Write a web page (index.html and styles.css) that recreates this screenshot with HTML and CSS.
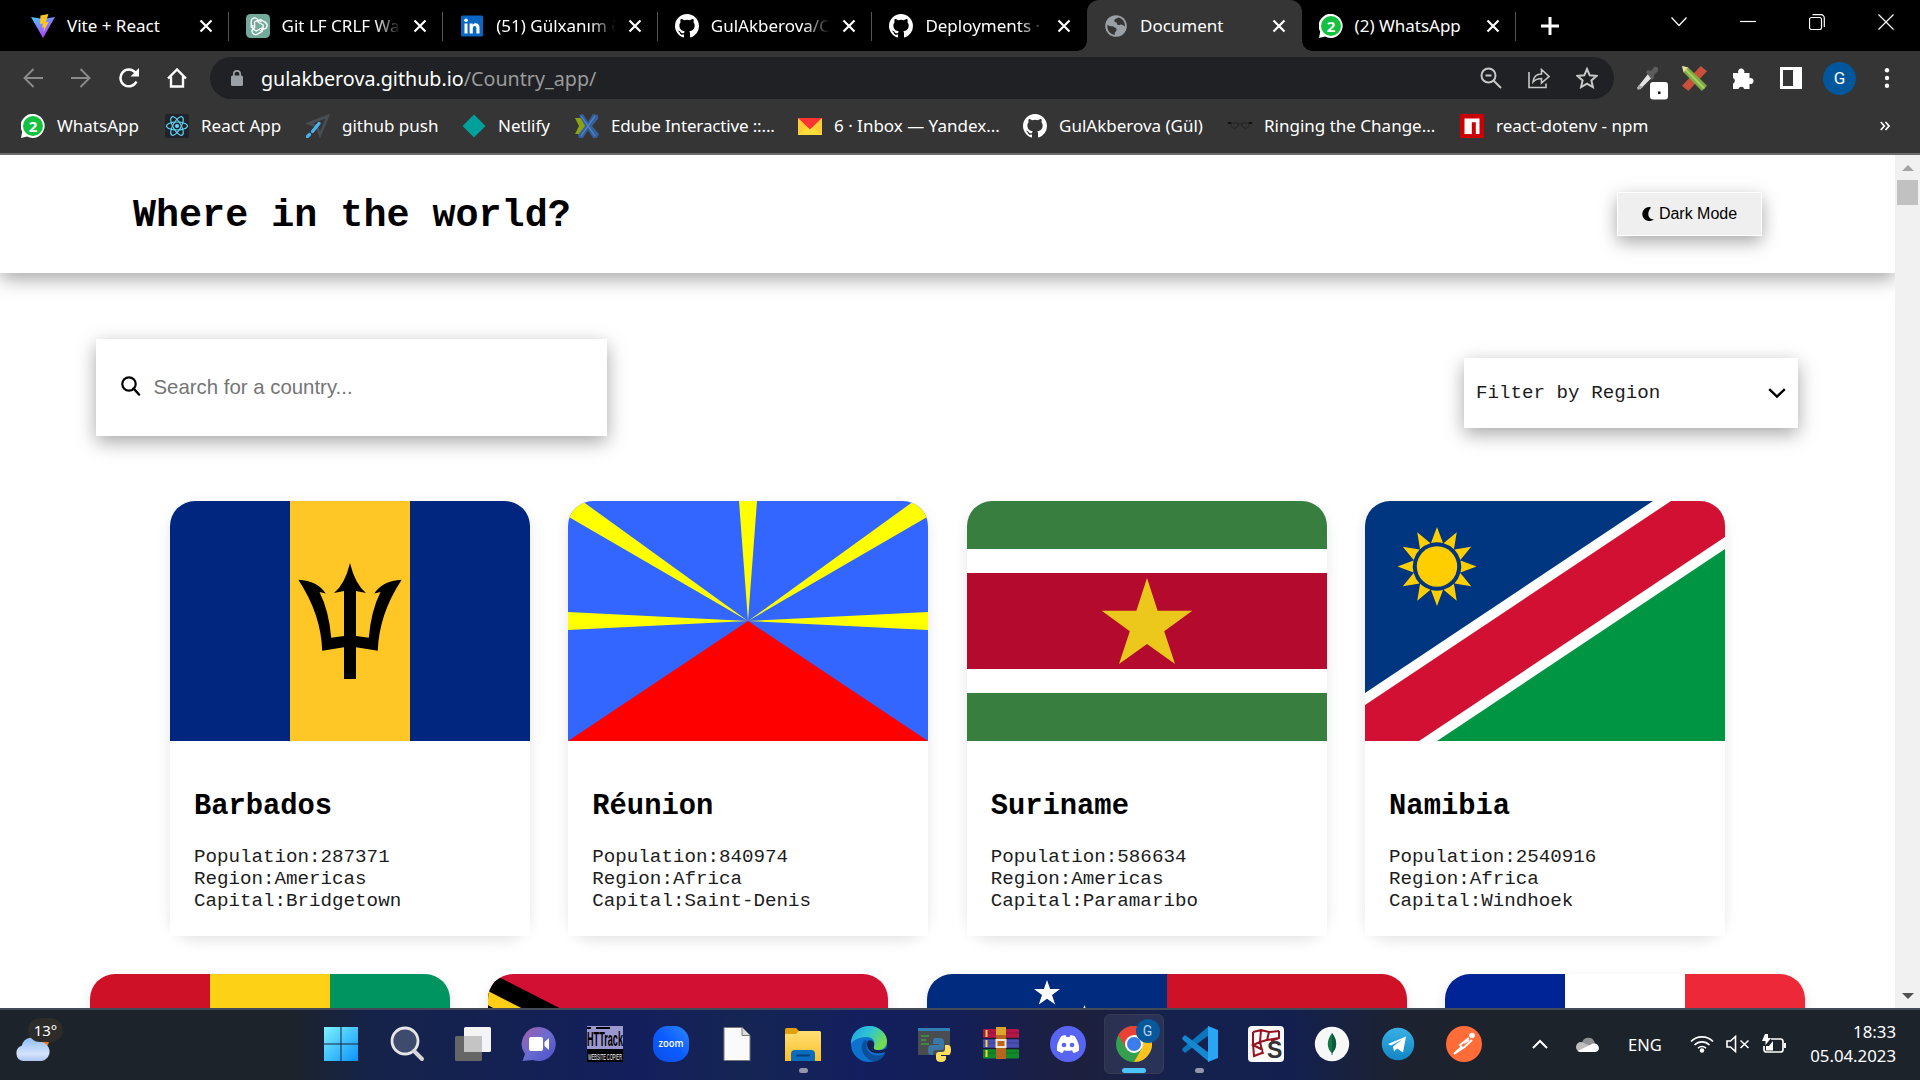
FILE: index.html
```html
<!DOCTYPE html>
<html lang="en">
<head>
<meta charset="utf-8">
<title>Document</title>
<link rel="stylesheet" href="styles.css">
</head>
<body>
<svg class="defs" aria-hidden="true">
  <defs>
    <linearGradient id="g-vite" x1="0" y1="0" x2=".6" y2="1"><stop offset="0" stop-color="#41d1ff"/><stop offset="1" stop-color="#bd34fe"/></linearGradient>
    <linearGradient id="g-win" x1="0" y1="0" x2="1" y2="1"><stop offset="0" stop-color="#7df3ff"/><stop offset="1" stop-color="#0a93fa"/></linearGradient>
    <linearGradient id="g-cloud" x1="0" y1="0" x2="0" y2="1"><stop offset="0" stop-color="#8fbdf7"/><stop offset=".7" stop-color="#d5e3fa"/><stop offset="1" stop-color="#a9c4ee"/></linearGradient>
    <linearGradient id="g-chat" x1="0" y1="0" x2="1" y2="1"><stop offset="0" stop-color="#a35ca8"/><stop offset=".5" stop-color="#6a6ccf"/><stop offset="1" stop-color="#4a50c8"/></linearGradient>
    <linearGradient id="g-folder" x1="0" y1="0" x2="0" y2="1"><stop offset="0" stop-color="#ffdf74"/><stop offset="1" stop-color="#fbc02a"/></linearGradient>
    <linearGradient id="g-edge" x1="0" y1="0" x2="1" y2=".5"><stop offset="0" stop-color="#1b9de2"/><stop offset=".5" stop-color="#2fc3d6"/><stop offset="1" stop-color="#72dc50"/></linearGradient>
    <linearGradient id="g-tg" x1="0" y1="0" x2="0" y2="1"><stop offset="0" stop-color="#38b0e4"/><stop offset="1" stop-color="#1286c4"/></linearGradient>
    <linearGradient id="g-zoom" x1="1" y1="0" x2="0" y2="1"><stop offset="0" stop-color="#2f86ff"/><stop offset=".5" stop-color="#0b5cff"/><stop offset="1" stop-color="#0a4fe6"/></linearGradient>
    <symbol id="close" viewBox="0 0 14 14"><path d="M1.500 1.500l11 11M12.500 1.500l-11 11" stroke="#fff" stroke-width="2.200" fill="none"/></symbol>
    <symbol id="github" viewBox="0 0 16 16"><path fill="#fff" fill-rule="evenodd" d="M8 0C3.58 0 0 3.58 0 8c0 3.54 2.29 6.53 5.47 7.59.4.07.55-.17.55-.38 0-.19-.01-.82-.01-1.49-2.01.37-2.53-.49-2.69-.94-.09-.23-.48-.94-.82-1.13-.28-.15-.68-.52-.01-.53.63-.01 1.08.58 1.23.82.72 1.21 1.87.87 2.33.66.07-.52.28-.87.51-1.07-1.78-.2-3.64-.89-3.64-3.95 0-.87.31-1.59.82-2.15-.08-.2-.36-1.02.08-2.12 0 0 .67-.21 2.2.82a7.6 7.6 0 0 1 4 0c1.53-1.04 2.2-.82 2.2-.82.44 1.1.16 1.92.08 2.12.51.56.82 1.27.82 2.15 0 3.07-1.87 3.75-3.65 3.95.29.25.54.73.54 1.48 0 1.07-.01 1.93-.01 2.2 0 .21.15.46.55.38A8.01 8.01 0 0 0 16 8c0-4.42-3.58-8-8-8z"/></symbol>
    <symbol id="whatsapp" viewBox="0 0 24 24"><path d="M0 24l1.200-6.200A12 12 0 1 1 6 22.500z" fill="#fff"/><circle cx="12" cy="12" r="10" fill="#14c13f"/><text x="12" y="17.500" text-anchor="middle" font-family="Open Sans, sans-serif" font-weight="700" font-size="15" fill="#fff">2</text></symbol>
  </defs>
</svg>

<header class="browser">
  <div class="tabstrip">
    <div class="tab"><svg class="fav" viewBox="0 0 24 24"><path d="M0 3l12 2 12-2L12 24z" fill="url(#g-vite)"/><path d="M17.500 0L9.500 1.500 9 10l3-.6-1 4.300 2.200-.5-1 5 5.500-10.500-3 .6z" fill="#ffc61c"/></svg><span class="tab-title">Vite + React</span><svg class="x"><use href="#close"/></svg></div>
    <div class="tab"><svg class="fav" viewBox="0 0 24 24"><rect width="24" height="24" rx="4.500" fill="#74aa9c"/><g fill="none" stroke="#fff" stroke-width="1.300"><g id="knot"><path d="M8.600 14V8l3.400-2 3.500 2M12 6c-1.500-3.400-6.500-2.600-6.800 1.500V13l3.500 2"/></g><use href="#knot" transform="rotate(120 12 12)"/><use href="#knot" transform="rotate(240 12 12)"/></g></svg><span class="tab-title fade">Git LF CRLF Wa</span><svg class="x"><use href="#close"/></svg></div>
    <div class="tab"><svg class="fav" viewBox="0 0 24 24"><rect x="1" y="1.500" width="22" height="21" rx="1.500" fill="#0a66c2"/><path d="M4.500 9.500h3v10h-3zM9.600 9.500h3v1.400c1.600-2.600 6.900-2.300 6.900 2.600v6h-3.100v-5.300c0-3-3.600-2.800-3.600 0v5.300H9.600z" fill="#fff"/><circle cx="6" cy="6.200" r="1.800" fill="#fff"/></svg><span class="tab-title fade">(51) Gülxanım Ə</span><svg class="x"><use href="#close"/></svg></div>
    <div class="tab"><svg class="fav"><use href="#github"/></svg><span class="tab-title fade">GulAkberova/C</span><svg class="x"><use href="#close"/></svg></div>
    <div class="tab"><svg class="fav"><use href="#github"/></svg><span class="tab-title fade">Deployments ·</span><svg class="x"><use href="#close"/></svg></div>
    <div class="tab active"><svg class="fav" viewBox="0 0 24 24"><circle cx="12" cy="12" r="10.800" fill="#9aa0a6"/><path d="M3.500 10.500c2 2.500 4.500 1 6.500 2.500s3 1 2.500 3-2 1.500-1.800 5C6 20.500 2.500 15.500 3.500 10.500zM14 3.600c-1 1.500-3.500 1-3.700 3S13 8 13 9.500s1.500 2 3 1.300 3 .2 4.800 1.700C21.500 8 18 4 14 3.600z" fill="#353535"/></svg><span class="tab-title">Document</span><svg class="x"><use href="#close"/></svg></div>
    <div class="tab"><svg class="fav"><use href="#whatsapp"/></svg><span class="tab-title">(2) WhatsApp</span><svg class="x"><use href="#close"/></svg></div>
    <svg class="newtab" viewBox="0 0 18 18"><path d="M9 0v18M0 9h18" stroke="#fff" stroke-width="3"/></svg>
    <div class="winctl">
      <svg viewBox="0 0 16 16"><path d="M.5 3.500L8 11.500l7.500-8"/></svg>
      <svg viewBox="0 0 16 16"><path d="M0 7.500h16"/></svg>
      <svg viewBox="0 0 16 16"><rect x=".5" y="3.500" width="12" height="12" rx="2"/><path d="M3.500 .7h8.500a3.300 3.300 0 0 1 3.300 3.300V13"/></svg>
      <svg viewBox="0 0 16 16"><path d="M.5 .5l15 15M15.500 .5l-15 15"/></svg>
    </div>
  </div>

  <div class="toolbar">
    <div class="nav">
      <svg class="dim" viewBox="0 0 20 20"><path d="M20 10H2M10.500 1L1.500 10l9 9"/></svg>
      <svg class="dim" viewBox="0 0 20 20"><path d="M0 10h18M9.500 1l9 9-9 9"/></svg>
      <svg viewBox="0 0 20 20"><path d="M17.500 13.500A8.400 8.400 0 1 1 16.300 4.500" stroke-width="2.500"/><path d="M20 0v8.500h-8.500z" fill="#fff" stroke="none"/></svg>
      <svg viewBox="0 0 20 20"><path d="M1 10.500L10 1.500l9 9M4 8.500V18.500h12V8.500" stroke-width="2.400"/></svg>
    </div>
    <div class="omnibox">
      <svg class="lock" viewBox="0 0 12 16"><rect y="5.500" width="12" height="10.500" rx="1.500" fill="#9aa0a6"/><path d="M2.800 6V4a3.200 3.200 0 0 1 6.400 0v2" fill="none" stroke="#9aa0a6" stroke-width="1.700"/></svg>
      <span class="url">gulakberova.github.io<i>/Country_app/</i></span>
      <div class="omni-icons">
        <svg viewBox="0 0 22 22"><circle cx="8.500" cy="8.500" r="7"/><path d="M13.500 13.500l7.500 7.500M5.500 8.500h6"/></svg>
        <svg viewBox="0 0 22 22"><path d="M1 5v15.500h17v-4M5 15c.5-5 3.500-8 8.500-8V2.500l7.500 7-7.500 6.500v-4.500c-4 0-6 1-8.500 3.500z" stroke-width="1.600"/></svg>
        <svg viewBox="0 0 22 22"><path d="M11 2l2.700 6.300 6.800.6-5.100 4.500 1.500 6.700-5.900-3.500-5.900 3.500 1.500-6.700L1.500 8.900l6.800-.6z"/></svg>
      </div>
    </div>
    <div class="ext">
      <svg class="picker" viewBox="0 0 34 34"><path d="M1 22L12 8l4 3.500L4 23.500z" fill="#e4e4e4"/><path d="M1 22l2-3 4 2-5 3z" fill="#aaa"/><path d="M10 6l2-2 3 1 3-4c3-1 5 1 4 4l-4 4v3l-2 2z" fill="#5c5c5c"/><rect x="14" y="16" width="18" height="17.500" rx="3" fill="#fff"/><rect x="22" y="25.500" width="2.500" height="2.500" fill="#111"/></svg>
      <svg class="pencil" viewBox="0 0 24 24"><path d="M18 0l6 5L6 24l-6-5z" fill="#c9503a"/><path d="M0 0l6 1.500L24 19l-5 5L1.500 6z" fill="#7fab42"/><path d="M3.500 3.500L21.500 21.500" stroke="#a9cf68" stroke-width="2"/><path d="M0 0l6 1.500L1.500 6z" fill="#ecd9a4"/></svg>
      <svg class="puzzle" viewBox="0 0 22 22"><path d="M1 6h5.300a3.200 3.200 0 1 1 5.900 0H17.500v5.200a3 3 0 1 1 0 5.600V22h-5.200a3.100 3.100 0 0 0-5.900 0H1v-5.300a3.100 3.100 0 0 0 0-5.700z" fill="#fff"/></svg>
      <svg class="panel" viewBox="0 0 22 22"><path d="M0 0h22v22H0z" fill="#fff"/><path d="M3 3h10v16H3z" fill="#353535"/></svg>
      <span class="avatar">G</span>
      <svg class="dots" viewBox="0 0 6 20"><circle cx="3" cy="2.200" r="2.200"/><circle cx="3" cy="10" r="2.200"/><circle cx="3" cy="17.800" r="2.200"/></svg>
    </div>
  </div>

  <div class="bookmarks">
    <div class="bm"><svg><use href="#whatsapp"/></svg><span>WhatsApp</span></div>
    <div class="bm"><svg viewBox="0 0 24 24"><rect width="24" height="24" rx="2" fill="#20232a"/><g fill="none" stroke="#61dafb" stroke-width="1.100"><ellipse cx="12" cy="12" rx="10.500" ry="4"/><ellipse cx="12" cy="12" rx="10.500" ry="4" transform="rotate(60 12 12)"/><ellipse cx="12" cy="12" rx="10.500" ry="4" transform="rotate(120 12 12)"/></g><circle cx="12" cy="12" r="2" fill="#61dafb"/></svg><span>React App</span></div>
    <div class="bm"><svg viewBox="0 0 24 24"><path d="M22 2L2.500 9.500l8 2.500 3.500 9z" fill="none" stroke="#4a4f54" stroke-width="2.500"/><path d="M1.500 22.500l2-2M6.500 17.500l6.500-8" stroke="#4ab3f4" stroke-width="3.200" stroke-linecap="round"/></svg><span>github push</span></div>
    <div class="bm"><svg viewBox="0 0 24 24"><path d="M12 .5L23.500 12 12 23.500.5 12z" fill="#00a19b"/></svg><span>Netlify</span></div>
    <div class="bm"><svg viewBox="0 0 24 24"><path d="M0 4h6l5 8-5 8H0l4-8z" fill="#8ba30f"/><path d="M4 1l4-1 5 8 5-8 5 1v4l-6 7 7 8-2 4h-4l-5-8-5 8H4l-1-3 7-9z" fill="#35609f"/><path d="M6 2l14 20M20 2L6 22" stroke="#5b86bf" stroke-width="1.200"/></svg><span>Edube Interactive ::...</span></div>
    <div class="bm"><svg viewBox="0 0 24 24"><path d="M0 4h24v17H0z" fill="#ffcc33"/><path d="M0 21L12 11l12 10z" fill="#ffdd3c"/><path d="M0 4h24L12 15.500z" fill="#f33"/></svg><span>6 · Inbox — Yandex...</span></div>
    <div class="bm"><svg><use href="#github"/></svg><span>GulAkberova (Gül)</span></div>
    <div class="bm"><svg viewBox="0 0 24 24"><path d="M0 9h3M21 9h3" stroke="#111" stroke-width="2"/><path d="M3 9h7v3l-2 2H5l-2-2zM14 9h7v3l-2 2h-3l-2-2zM10 10h4" fill="none" stroke="#222" stroke-width=".9"/></svg><span>Ringing the Change...</span></div>
    <div class="bm"><svg viewBox="0 0 24 24"><path d="M0 0h24v24H0z" fill="#c00"/><path d="M4.500 4.500h15V20h-3.700V8.200h-4V20H4.500z" fill="#fff"/></svg><span>react-dotenv - npm</span></div>
    <div class="more"><svg viewBox="0 0 10 10"><path d="M.8 1l3.500 4-3.500 4M5.500 1l3.500 4-3.500 4" fill="none" stroke="#fff" stroke-width="1.700"/></svg></div>
  </div>
</header>

<div class="viewport">
  <div class="page">
    <div class="masthead">
      <h1>Where in the world?</h1>
      <button class="mode"><svg viewBox="0 0 12 14"><path d="M7.500 0A7 7 0 1 0 12 12.200C7 12.800 3.800 7 8.800 .8 9 .3 8.300 0 7.500 0z"/></svg>Dark Mode</button>
    </div>
    <div class="filters">
      <div class="search"><svg viewBox="0 0 20 20"><circle cx="8" cy="8" r="6.700" fill="none" stroke="#000" stroke-width="2.200"/><path d="M12.500 12.500l5.500 6" stroke="#000" stroke-width="2.500" stroke-linecap="round"/></svg><span>Search for a country...</span></div>
      <div class="select"><span>Filter by Region</span><svg viewBox="0 0 18 10"><path d="M1.200 1.200L9 8.600l7.800-7.400" fill="none" stroke="#000" stroke-width="2.400"/></svg></div>
    </div>
    <main class="countries">
      <article class="card">
        <div class="flag"><svg width="360" height="240" viewBox="0 0 360 240"><path fill="#00267f" d="M0 0h360v240H0z"/><path fill="#ffc726" d="M120 0h120v240H120z"/><g id="tine"><path d="M128.300 78.700Q148 80 155.700 92.500L149.500 91Q159 110 161.200 136.700L174 135h6v11.300h-6L152.200 149.700Q151 113 128.300 78.700z"/></g><use href="#tine" transform="matrix(-1 0 0 1 360 0)"/><path d="M180 62Q185 83 196 92L186 90V178H174V90L164 92Q175 83 180 62z"/></svg></div>
        <div class="info"><h2>Barbados</h2><p>Population:287371</p><p>Region:Americas</p><p>Capital:Bridgetown</p></div>
      </article>
      <article class="card">
        <div class="flag"><svg width="360" height="240" viewBox="0 0 360 240"><path fill="#36f" d="M0 0h360v240H0z"/><path fill="#ff0" d="M180 120L0 129V111zM180 120L0 15.500V0h14zM180 120L171 0h18zM180 120L346 0h14v15.500zM180 120l180-9v18z"/><path fill="red" d="M180 120l180 120H0z"/></svg></div>
        <div class="info"><h2>Réunion</h2><p>Population:840974</p><p>Region:Africa</p><p>Capital:Saint-Denis</p></div>
      </article>
      <article class="card">
        <div class="flag"><svg width="360" height="240" viewBox="0 0 360 240"><path fill="#377e3f" d="M0 0h360v240H0z"/><path fill="#fff" d="M0 48h360v144H0z"/><path fill="#b40a2d" d="M0 72h360v96H0z"/><path fill="#ecc81d" d="M180 77l10.600 32.700h34.700l-28.100 20.600L208 163l-28-20-28 20 10.800-32.700-28.100-20.600h34.700z"/></svg></div>
        <div class="info"><h2>Suriname</h2><p>Population:586634</p><p>Region:Americas</p><p>Capital:Paramaribo</p></div>
      </article>
      <article class="card">
        <div class="flag"><svg width="360" height="240" viewBox="0 0 360 240"><path fill="#003580" d="M0 0h360v240H0z"/><path fill="#009543" d="M360 0v240H0z"/><path fill="#fff" d="M288 0h72v48L72 240H0v-48z"/><path fill="#d21034" d="M306 0h54v36L54 240H0v-36z"/><g fill="#ffce00" transform="translate(72 65.500)"><circle r="20.200"/><g id="rays"><path id="ray" d="M-6 -23.500L0 -39.500 6 -23.500Q0 -25 -6 -23.500z"/><use href="#ray" transform="rotate(30)"/><use href="#ray" transform="rotate(60)"/></g><use href="#rays" transform="rotate(90)"/><use href="#rays" transform="rotate(180)"/><use href="#rays" transform="rotate(270)"/></g></svg></div>
        <div class="info"><h2>Namibia</h2><p>Population:2540916</p><p>Region:Africa</p><p>Capital:Windhoek</p></div>
      </article>
      <article class="card"><div class="flag"><svg width="360" height="240" viewBox="0 0 360 240"><path fill="#ce1126" d="M0 0h120v240H0z"/><path fill="#fcd116" d="M120 0h120v240H120z"/><path fill="#009460" d="M240 0h120v240H240z"/></svg></div></article>
      <article class="card"><div class="flag"><svg width="400" height="240" viewBox="0 0 400 240"><path fill="#d21034" d="M0 0h400v240H0z"/><path d="M0-2.500L235 117.500 0 237z"/><path fill="#ffce16" d="M0 17L197 117.500 0 218z"/><path d="M0 31.300L168 117.500 0 203z"/></svg></div></article>
      <article class="card"><div class="flag"><svg width="480" height="240" viewBox="0 0 480 240"><path fill="#002b7f" d="M0 0h240v240H0z"/><path fill="#ce1126" d="M240 0h240v240H240z"/><path id="star" fill="#fff" d="M120 6l3.100 9.100 9.900 0-8 5.900 3.200 9.500-8.200-5.800-8.200 5.800 3.200-9.500-8-5.900h9.900z"/><use href="#star" transform="translate(37.500 25)"/></svg></div></article>
      <article class="card"><div class="flag"><svg width="360" height="240" viewBox="0 0 360 240"><path fill="#002395" d="M0 0h120v240H0z"/><path fill="#fff" d="M120 0h120v240H120z"/><path fill="#ed2939" d="M240 0h120v240H240z"/></svg></div></article>
    </main>
  </div>
  <div class="scrollbar"><svg class="up" viewBox="0 0 12 6"><path d="M0 6l6-6 6 6z" fill="#a3a3a3"/></svg><div class="thumb"></div><svg class="down" viewBox="0 0 12 6"><path d="M0 0h12L6 6z" fill="#505050"/></svg></div>
</div>

<footer class="taskbar">
  <div class="weather"><svg viewBox="0 0 36 28"><circle cx="27" cy="8" r="7" fill="#f0771d"/><path d="M8 28a8 8 0 0 1-1-15.500A10 10 0 0 1 25 9a9.600 9.600 0 0 1 2 19z" fill="url(#g-cloud)"/></svg><span>13°</span></div>
  <div class="apps">
    <div class="app"><svg viewBox="0 0 36 36"><path d="M1 1h16.500v16.500H1zM18.500 1H35v16.500H18.500zM1 18.500h16.500V35H1zM18.500 18.500H35V35H18.500z" fill="url(#g-win)"/></svg></div>
    <div class="app"><svg viewBox="0 0 36 36"><circle cx="16" cy="15" r="13" fill="#3f4b6d" stroke="#e6e6e6" stroke-width="2.800"/><path d="M25 25l8 8" stroke="#d8d8d8" stroke-width="4" stroke-linecap="round"/></svg></div>
    <div class="app"><svg viewBox="0 0 36 36"><rect y="10" width="27" height="25" rx="1.500" fill="#666"/><rect x="9" y="1" width="27" height="25" rx="1.500" fill="#f4f4f4"/><path d="M9 10h18v16H9z" fill="#c4c4c4"/></svg></div>
    <div class="app"><svg viewBox="0 0 36 36"><path d="M18 1a17 17 0 1 1-6 33l-10.500 1 2.500-7A17 17 0 0 1 18 1z" fill="url(#g-chat)"/><rect x="8" y="11" width="14" height="14" rx="2" fill="#fff"/><path d="M23.500 16l4.500-4v12l-4.500-4z" fill="#fff"/></svg></div>
    <div class="app"><svg viewBox="0 0 36 36"><path d="M0 0h36v23H0z" fill="#9a98cf"/><path d="M0 23h36v13H0z" fill="#000"/><path d="M0 2h4M9 2h14" stroke="#000" stroke-width="2"/><text x="0" y="20" textLength="36" lengthAdjust="spacingAndGlyphs" font-family="Liberation Sans, sans-serif" font-weight="700" font-size="20">HTTrack</text><text x="1" y="33.500" textLength="34" lengthAdjust="spacingAndGlyphs" font-family="Liberation Sans, sans-serif" font-size="9" fill="#fff">WEBSITE COPIER</text></svg></div>
    <div class="app"><svg viewBox="0 0 36 36"><rect width="36" height="36" rx="15" fill="url(#g-zoom)"/><text x="5.500" y="20.500" textLength="25" lengthAdjust="spacingAndGlyphs" font-family="Open Sans, sans-serif" font-weight="600" font-size="10.500" fill="#fff">zoom</text></svg></div>
    <div class="app"><svg viewBox="0 0 36 36"><path d="M5 1.500h18l8 8v25H5z" fill="#fafafa" stroke="#777" stroke-width="1"/><path d="M23 1.500V9.500h8" fill="#ddd" stroke="#777"/></svg></div>
    <div class="app running"><svg viewBox="0 0 36 36"><path d="M0 3.500Q0 2 1.500 2H11l4 4-3 4H0z" fill="#e2a10c"/><path d="M0 8h11l3-3h20.500Q36 5 36 6.500V35H0z" fill="url(#g-folder)"/><path d="M6 35v-7q0-4 4-4h16q4 0 4 4v7z" fill="#0a6cbd"/><path d="M12 29.500h12" stroke="#063f78" stroke-width="2" stroke-linecap="round"/></svg></div>
    <div class="app"><svg viewBox="0 0 36 36"><circle cx="18" cy="18" r="18" fill="#0d72cf"/><path d="M0 18C0 4 12 0 18 0c11 0 18 8 18 15 0 6-4 9-9 9-4 0-5-1.500-4-4 2-5-2-9-7-9C8 11 2 14 0 18z" fill="url(#g-edge)"/><path d="M14 14c-5 4-4 12 1 17 3 3 6 4.500 9 4.500 5-1 8-4 10.500-8-7 4-17 2-19-6-.5-3 .5-5 1.500-6.500z" fill="#0c4f9c"/><path d="M17 15c-3 5 1 11 7 12 4 .8 8 0 11-1.500l1-4c-3 3-7 3-9 2.500-4 0-5-1.500-4-4 1-4-3-7-6-5z" fill="#14204f"/></svg></div>
    <div class="app"><svg viewBox="0 0 36 36"><path d="M1 2h32v27H1z" fill="#4a4d50"/><path d="M1 2h32v3H1z" fill="#2f7fb8"/><path d="M4 10h8M4 14h5M4 18h8" stroke="#3f9b3f" stroke-width="1.500"/><path d="M18 12h5q4 0 4 4v5q0 3-3 3h-5q-3 0-3 3v2h-2q-3 0-3-5t3-5h8v-1h-6v-2q0-4 2-4z" fill="#3b78a8"/><path d="M28 19h3q3 0 3 5t-3 5h-7v1h5v2q0 4-5 4t-5-4v-3q0-3 3-3h3q3 0 3-3z" fill="#ffe05e"/></svg></div>
    <div class="app"><svg viewBox="0 0 36 36"><rect y="3" width="36" height="10" rx="1" fill="#b3174a"/><rect y="13" width="36" height="10" rx="1" fill="#4a4fb4"/><rect y="23" width="36" height="9.500" rx="1" fill="#128a2c"/><path d="M0 12.500h36M0 22.500h36" stroke="#1a1a2a" stroke-width="1.500"/><path d="M0 7h36M0 17h36M0 27h36" stroke="#000" stroke-opacity=".2"/><path d="M3.500 4v28" stroke="#ffd43a" stroke-width="2" stroke-dasharray="7 3"/><path d="M13 1h10v32H13z" fill="#b5651d"/><path d="M13 1h10v8H13z" fill="#dca62c"/><path d="M13.500 14h9v7h-9z" fill="none" stroke="#f0e6d0" stroke-width="2"/></svg></div>
    <div class="app"><svg viewBox="0 0 36 36"><circle cx="18" cy="18" r="18" fill="#5865f2"/><path d="M11 10.500c1.700-1 3.500-1.300 4.500-1.500l1 2h3l1-2c1 .2 2.800.5 4.500 1.500 3 4.500 4.500 9 4 14-2 1.500-4 2.200-5.500 2.500l-1.500-2.800c-2.500.7-5.500.7-8 0L12.500 27c-1.500-.3-3.500-1-5.500-2.500-.5-5 1-9.500 4-14z" fill="#fff"/><circle cx="14" cy="19" r="2.300" fill="#5865f2"/><circle cx="22" cy="19" r="2.300" fill="#5865f2"/></svg></div>
    <div class="app current"><svg viewBox="0 0 36 36"><circle cx="18" cy="18" r="18" fill="#34a04f"/><path d="M2.400 9A18 18 0 0 1 33.600 9H18L10.200 22.500z" fill="#e94235"/><path d="M33.600 9A18 18 0 0 1 18 36l7.800-13.500L18 9z" fill="#fcc31e"/><circle cx="18" cy="18" r="9" fill="#fff"/><circle cx="18" cy="18" r="7" fill="#3b7ded"/></svg><span class="badge">G</span></div>
    <div class="app running"><svg viewBox="0 0 36 36"><path d="M0 24l3 3L27 9V0L1 22z" fill="#0b76bd"/><path d="M0 12l3-3 24 18v9L1 14z" fill="#1588cf"/><path d="M26 0l10 4v28l-10 4z" fill="#29a5f3"/></svg></div>
    <div class="app"><svg viewBox="0 0 36 36"><rect width="36" height="36" rx="4" fill="#fafafa"/><path d="M5 6l8-2 8 2 10-1M5 6v12l1 12 8-3M13 4l-1 12-7 3 10 5M21 6l-2 8-7 2M19 14l12-2V5M31 12l-8 3M12 16l3 12" fill="none" stroke="#95131f" stroke-width="2"/><text x="19" y="32" font-family="Liberation Sans, sans-serif" font-size="23" font-weight="700" fill="#333">S</text></svg></div>
    <div class="app"><svg viewBox="0 0 36 36"><circle cx="18" cy="18" r="17.200" fill="#f7f7f7"/><path d="M18 7c6 8 5 15 .5 20V29h-1v-2C13 22 12 15 18 7z" fill="#11774b"/><path d="M18 7c6 8 5 15 0 20z" fill="#0a5b3b"/></svg></div>
    <div class="app"><svg viewBox="0 0 36 36"><circle cx="18" cy="18" r="16.200" fill="url(#g-tg)"/><path d="M8 18l18-7.500-3 16-6-4-3 3-1-5 9-7-11 6z" fill="#fff"/></svg></div>
    <div class="app"><svg viewBox="0 0 36 36"><circle cx="18" cy="18" r="18" fill="#ff6c37"/><circle cx="26" cy="9.500" r="2.800" fill="#fff"/><path d="M23 12L14 19l1.500 2L8 28l9-6 1.500-1L26 14M18 17l5-3" stroke="#fff" stroke-width="2" fill="none"/></svg></div>
  </div>
  <div class="tray">
    <svg class="t-chev" viewBox="0 0 16 10"><path d="M1 9l7-7 7 7" fill="none" stroke="#fff" stroke-width="2"/></svg>
    <svg class="t-cloud" viewBox="0 0 24 16"><path d="M6 7a6.500 6.500 0 0 1 12.500-1l2 7H4z" fill="#8f9194"/><path d="M5 16a5 5 0 0 1 0-10q2 0 4 1.500L20 12l-4 4z" fill="#bdbdbd"/><path d="M5 16q-2 0-3.500-1L17 7.500a5 4.500 0 0 1 3 8.500z" fill="#fff"/></svg>
    <span class="lang">ENG</span>
    <svg class="t-wifi" viewBox="0 0 24 18"><g fill="none" stroke="#fff" stroke-width="1.600"><path d="M1 6.500a15.500 15.500 0 0 1 22 0M4.500 10a10.600 10.600 0 0 1 15 0M8 13.200a5.700 5.700 0 0 1 8 0"/></g><circle cx="12" cy="15.500" r="2.200" fill="#fff"/></svg>
    <svg class="t-vol" viewBox="0 0 24 18"><path d="M1 6v6h3.500l5 4.500v-15L4.500 6zM14.500 5.500l8 7.500M22.500 5.500l-8 7.500" fill="none" stroke="#fff" stroke-width="1.600"/></svg>
    <svg class="t-bat" viewBox="0 0 24 20"><path d="M9 5h9.500q2.500 0 2.500 2.500v8q0 2.500-2.500 2.500H4.500Q2 18 2 15.500V12" fill="none" stroke="#fff" stroke-width="1.700"/><path d="M22 9h2v5h-2z" fill="#fff"/><path d="M4 16.500V12h3l4-5v9.500zM3 0h3v4h3L3.500 11V7H0z" fill="#fff"/></svg>
    <div class="clock"><span>18:33</span><span>05.04.2023</span></div>
  </div>
</footer>
</body>
</html>
```
FILE: styles.css
```css
* { box-sizing: border-box; }

body {
  margin: 0;
  width: 1920px;
  height: 1080px;
  overflow: hidden;
  display: flex;
  flex-direction: column;
  background: #fff;
  color: #000;
  font-family: "Noto Sans", "Open Sans", sans-serif;
}

svg { display: block; flex: none; }
.defs { position: absolute; width: 0; height: 0; }

/* Browser chrome */
.browser {
  flex: none;
  height: 155px;
  background: #353535;
  border-bottom: 2px solid #6b6b6b;
  color: #fff;
  font-size: 17px;
}

.tabstrip {
  display: flex;
  height: 51px;
  padding-left: 14px;
  background: #000;
}

.tab {
  display: flex;
  align-items: center;
  width: 214.600px;
  height: 51px;
  padding: 0 16px 0 17px;
  background: linear-gradient(#555, #555) right 0 top 12px / 1px 29px no-repeat;
}

.tab:nth-child(5) { background: none; }

.tab.active {
  position: relative;
  background: #353535;
  border-radius: 12px 12px 0 0;
}

.tab.active::before,
.tab.active::after {
  content: "";
  position: absolute;
  bottom: 0;
  width: 10px;
  height: 10px;
}

.tab.active::before { left: -10px; background: radial-gradient(circle at 0 0, #000 9.500px, #353535 10px); }
.tab.active::after { right: -10px; background: radial-gradient(circle at 100% 0, #000 9.500px, #353535 10px); }

.fav { width: 24px; height: 24px; margin-right: 12px; }

.tab-title {
  flex: 1;
  min-width: 0;
  white-space: nowrap;
  margin-right: 12px;
}

.fade {
  -webkit-mask-image: linear-gradient(90deg, #000 78%, transparent);
  mask-image: linear-gradient(90deg, #000 78%, transparent);
}

.x { width: 14px; height: 14px; }
.newtab { width: 18px; height: 18px; margin: 17px 0 0 25px; }

.winctl {
  display: flex;
  gap: 53px;
  margin: 14px 26px 0 auto;
}

.winctl svg { width: 16px; height: 16px; fill: none; stroke: #fff; stroke-width: 1.200; }

.toolbar {
  display: flex;
  align-items: center;
  height: 54px;
  padding-left: 23px;
}

.nav { display: flex; gap: 28px; width: 187px; }
.nav svg { width: 20px; height: 20px; fill: none; stroke: #fff; stroke-width: 1.900; }
.nav .dim { stroke: #8b8b8b; }

.omnibox {
  display: flex;
  align-items: center;
  width: 1404px;
  height: 42px;
  padding: 0 16px 0 21px;
  border-radius: 21px;
  background: #202124;
}

.lock { width: 12px; height: 16px; margin-right: 18px; }
.url { padding-top: 1px; font-size: 19.700px; line-height: 30px; }
.url i { font-style: normal; color: #9a9a9a; }
.omni-icons { display: flex; gap: 26px; margin-left: auto; }
.omni-icons svg { width: 22px; height: 22px; fill: none; stroke: #c7c7c7; stroke-width: 2; }

.ext { display: flex; align-items: center; }
.picker { width: 34px; height: 34px; margin: 9px 12px 0 22px; }
.pencil { width: 25px; height: 25px; }
.puzzle { width: 22px; height: 22px; margin: 0 26px 0 25px; }
.panel { width: 22px; height: 22px; }

.avatar {
  width: 33px;
  height: 33px;
  margin: 0 28px 0 21px;
  border-radius: 50%;
  background: #01579b;
  font: 17px/33px Roboto, sans-serif;
  text-align: center;
}

.dots { width: 6px; height: 20px; fill: #fff; }

.bookmarks {
  display: grid;
  grid-template-columns: 144px 141px 156px 113px 223px 225px 205px 232px 1fr auto;
  align-items: center;
  height: 43px;
  padding: 0 30px 2px 21px;
}

.bm { display: flex; align-items: center; gap: 12px; white-space: nowrap; }
.bm svg { width: 24px; height: 24px; margin-top: 1px; }
.bm:nth-child(5) { letter-spacing: -.15px; }
.more svg { width: 10px; height: 10px; }

/* Web page */
.viewport { display: flex; height: 853px; overflow: hidden; }
.page { width: 1895px; }

.masthead {
  display: flex;
  align-items: center;
  justify-content: space-between;
  height: 118px;
  padding: 0 133px;
  box-shadow: 0 6px 18px rgba(0, 0, 0, .35);
}

h1 {
  margin: 0;
  padding-top: 3px;
  font: 700 38.400px/44px "Liberation Mono", monospace;
}

.mode {
  display: flex;
  align-items: center;
  justify-content: center;
  gap: 5px;
  width: 145px;
  height: 44px;
  padding: 0;
  border: 1px solid #fff;
  background: #efefef;
  box-shadow: 0 6px 18px rgba(0, 0, 0, .35);
  color: #000;
  font: 16px "Liberation Sans", sans-serif;
}

.mode svg { width: 12px; height: 14px; }

.filters {
  display: flex;
  align-items: center;
  justify-content: space-between;
  padding: 66px 97px 65px 96px;
}

.search,
.select {
  display: flex;
  align-items: center;
  background: #fff;
  box-shadow: 0 6px 18px rgba(0, 0, 0, .35);
}

.search {
  gap: 12.500px;
  width: 511px;
  height: 97px;
  padding-left: 25px;
  color: #757575;
  font: 20.400px "Liberation Sans", sans-serif;
}

.search svg { width: 20px; height: 20px; margin-top: -3px; }

.select {
  justify-content: space-between;
  width: 334px;
  height: 70px;
  margin-top: 11px;
  padding: 0 12px;
  color: #1c1c1c;
  font: 19.200px "Liberation Mono", monospace;
}

.select svg { width: 18px; height: 10px; }

.countries {
  display: flex;
  flex-wrap: wrap;
  justify-content: center;
  gap: 38px 38.400px;
}

.card {
  border-radius: 25px;
  box-shadow: 0 5px 14px rgba(0, 0, 0, .1);
}

.flag { border-radius: 25px 25px 0 0; overflow: hidden; }

.info {
  height: 195px;
  padding: 50px 24px 0;
  background: #fff;
  font: 19.200px/22px "Liberation Mono", monospace;
}

h2 { margin: 0 0 23px; font-size: 28.800px; line-height: 32px; }
p { margin: 0; color: #1c1c1c; }

.scrollbar {
  display: flex;
  flex-direction: column;
  align-items: center;
  width: 25px;
  background: #f1f1f1;
}

.up, .down { width: 12px; height: 6px; }
.up { margin: 10px 0 9px; }
.down { margin: auto 0 9px; }
.thumb { width: 21px; height: 25px; background: #c1c1c1; }

/* Taskbar */
.taskbar {
  display: flex;
  flex: none;
  height: 72px;
  border-top: 2px solid #434a57;
  background: linear-gradient(90deg, #1d232b 0, #1d232b 290px, #15234a 370px, #131f5c 640px, #152553 740px, #131f5e 860px, #141f56 960px, #1d1f3d 1080px, #15224e 1180px, #13204f 1290px, #1d2230 1400px, #1d232b 1500px);
  color: #fff;
}

.weather { position: relative; width: 308px; padding: 23px 0 0 15px; }
.weather svg { width: 36px; height: 28px; }

.weather span {
  position: absolute;
  left: 28px;
  top: 8px;
  width: 35px;
  height: 24px;
  border-radius: 12px;
  background: #2d2c2b;
  font-size: 15px;
  line-height: 24px;
  text-align: center;
}

.apps { display: flex; width: 1189px; }

.app {
  position: relative;
  display: flex;
  justify-content: center;
  width: 66.050px;
  height: 70px;
  padding-top: 16px;
}

.app svg { width: 36px; height: 36px; }

.running::after,
.current::after {
  content: "";
  position: absolute;
  top: 58px;
  width: 9px;
  height: 5px;
  border-radius: 3px;
  background: #9297ae;
}

.current::after { width: 24px; background: #4cc2ff; }

.current::before {
  content: "";
  position: absolute;
  inset: 4px 3px 6px;
  border: 1px solid #363a54;
  border-radius: 6px;
  background: rgba(255, 255, 255, .08);
}

.current svg { position: relative; }

.badge {
  position: absolute;
  left: 35px;
  top: 9px;
  width: 24px;
  height: 24px;
  border-radius: 50%;
  background: #07599c;
  color: #b9d2e8;
  font: 14px/24px Roboto, sans-serif;
  text-align: center;
}

.tray { display: flex; align-items: center; flex: 1; padding: 0 24px 2px 35px; }
.t-chev { width: 16px; height: 10px; margin-right: 28px; }
.t-cloud { width: 24px; height: 16px; margin-right: 28px; }
.lang { width: 34px; font-size: 16.500px; margin-right: 28px; }
.t-wifi { width: 24px; height: 18px; margin-right: 12px; }
.t-vol { width: 24px; height: 18px; margin-right: 12px; }
.t-bat { width: 24px; height: 20px; }

.clock {
  display: flex;
  flex-direction: column;
  align-items: flex-end;
  margin-left: auto;
  font-size: 16.800px;
  line-height: 24px;
}
```
